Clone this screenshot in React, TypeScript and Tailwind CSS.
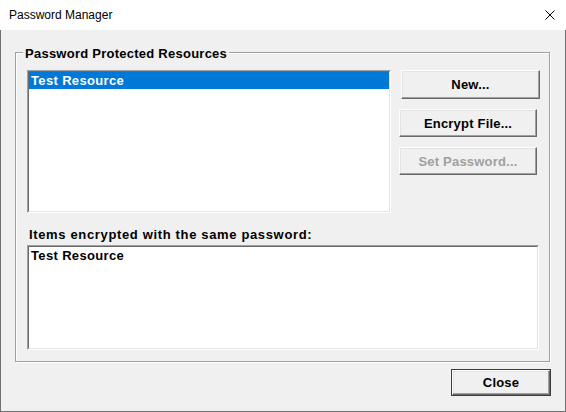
import React from "react";

const font = "font-['Liberation_Sans',Arial,sans-serif]";

function Btn({
  label,
  disabled,
  className,
}: {
  label: string;
  disabled?: boolean;
  className?: string;
}) {
  return (
    <div
      className={`flex items-center justify-center border border-t-white border-l-white border-r-[#696969] border-b-[#696969] bg-[#f0f0f0] shadow-[inset_-1px_-1px_0_#a0a0a0,inset_1px_1px_0_#e3e3e3] text-[13px] font-bold tracking-[0.2px] leading-[15px] ${
        disabled ? "text-[#a0a0a0]" : "text-black"
      } ${className ?? ""}`}
    >
      {label}
    </div>
  );
}

const listBox =
  "border border-t-[#a0a0a0] border-l-[#a0a0a0] border-r-white border-b-white bg-white";
const listInner =
  "h-full w-full border border-t-[#696969] border-l-[#696969] border-r-[#e3e3e3] border-b-[#e3e3e3]";

export default function App() {
  return (
    <div className={`w-[566px] h-[412px] flex flex-col bg-[#f0f0f0] ${font}`}>
      {/* Title bar */}
      <div className="h-[30px] bg-white flex items-center justify-between pl-[9px] pr-[11px]">
        <span className="text-[12px] leading-[14px] text-black">Password Manager</span>
        <svg width="10" height="10" viewBox="0 0 10 10" className="block">
          <path d="M0.5 0.5 L9.5 9.5 M9.5 0.5 L0.5 9.5" stroke="#000" strokeWidth="1" fill="none" />
        </svg>
      </div>

      {/* Body */}
      <div className="flex-1 flex flex-col border-x border-b border-[#707070]">
        {/* Group box */}
        <div className="relative ml-[14px] mt-[22px] w-[535px] h-[310px] border border-[#a0a0a0] shadow-[inset_1px_1px_0_#fff,1px_1px_0_#fff]">
          <div className="absolute left-[7px] top-[-7px] bg-[#f0f0f0] px-[2px] text-[13px] font-bold tracking-[0.25px] leading-[15px] text-black">
            Password Protected Resources
          </div>

          <div className="flex flex-col pl-[11px] pt-[17px]">
            <div className="flex">
              <div className={`w-[364px] h-[143px] ${listBox}`}>
                <div className={listInner}>
                  <div className="h-[17px] bg-[#0078d7] text-white text-[13px] font-bold tracking-[0.35px] leading-[17px] pl-[2px]">
                    Test Resource
                  </div>
                </div>
              </div>
              <div className="flex flex-col ml-[8px] gap-[10px]">
                <Btn label="New..." className="ml-[2px] w-[139px] h-[29px]" />
                <Btn label="Encrypt File..." className="w-[138px] h-[28px]" />
                <Btn label="Set Password..." disabled className="w-[138px] h-[28px]" />
              </div>
            </div>

            <div className="mt-[14px] pl-[2px] text-[13px] font-bold tracking-[0.65px] leading-[15px] text-black">
              Items encrypted with the same password:
            </div>

            <div className={`mt-[3px] w-[512px] h-[105px] ${listBox}`}>
              <div className={listInner}>
                <div className="h-[17px] text-black text-[13px] font-bold tracking-[0.35px] leading-[17px] pl-[2px]">
                  Test Resource
                </div>
              </div>
            </div>
          </div>
        </div>

        {/* Close button */}
        <div className="self-end mr-[14px] mt-[7px] w-[100px] h-[27px] border border-[#3c3c3c] flex">
          <Btn label="Close" className="flex-1" />
        </div>
      </div>
    </div>
  );
}
